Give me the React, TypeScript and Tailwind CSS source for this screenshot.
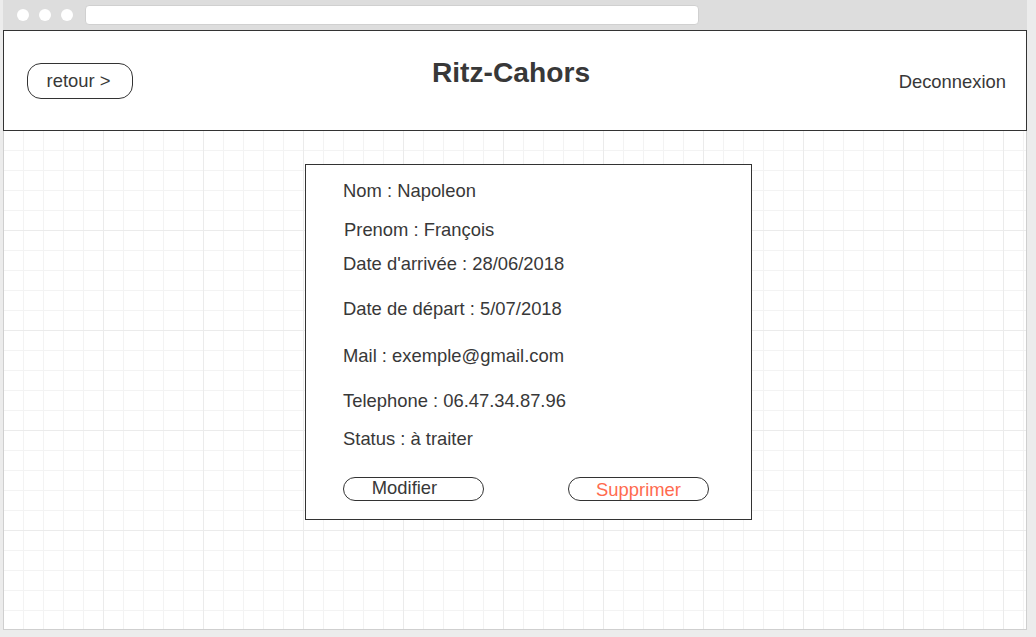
export default function App() {
  const rows = [
    { text: 'Nom : Napoleon', cls: 'mt-[15px]' },
    { text: 'Prenom : François', cls: 'mt-[17px] ml-px' },
    { text: "Date d'arrivée : 28/06/2018", cls: 'mt-[12px]' },
    { text: 'Date de départ : 5/07/2018', cls: 'mt-[23px]' },
    { text: 'Mail : exemple@gmail.com', cls: 'mt-[25px]' },
    { text: 'Telephone : 06.47.34.87.96', cls: 'mt-[23px]' },
    { text: 'Status : à traiter', cls: 'mt-[16px]' },
  ];

  return (
    <div className="w-[1036px] h-[637px] bg-[#ececec] pl-[3px] pb-[7px] font-['Liberation_Sans',Arial,sans-serif] text-[#383838]">
      <div className="flex flex-col h-full w-[1024px]">
        {/* browser chrome */}
        <div className="h-[30px] shrink-0 bg-[#dddddd] flex items-center pl-[14px]">
          <div className="flex gap-[10px]">
            <span className="w-[12px] h-[12px] rounded-full bg-white" />
            <span className="w-[12px] h-[12px] rounded-full bg-white" />
            <span className="w-[12px] h-[12px] rounded-full bg-white" />
          </div>
          <div className="ml-[12px] w-[614px] h-[20px] rounded-[4px] bg-white border border-[#d0d0d0]" />
        </div>

        {/* header */}
        <div className="h-[101px] shrink-0 border border-[#333] bg-white grid grid-cols-[1fr_auto_1fr] items-center px-[23px]">
          <div>
            <button className="w-[106px] h-[36px] rounded-[14px] border border-[#333] text-[18.4px] leading-[22px] mt-[1px] pr-[3px]">
              retour &gt;
            </button>
          </div>
          <div className="text-[28.2px] font-bold leading-[32px] -mt-[18px] mr-[8px]">Ritz-Cahors</div>
          <div className="justify-self-end text-[18.4px] leading-[22px] mt-[3px] -mr-[3px]">Deconnexion</div>
        </div>

        {/* grid canvas */}
        <div className="flex-1 border-x border-b border-[#cfcfcf] bg-white bg-[linear-gradient(to_right,#ebebeb_1px,transparent_1px),linear-gradient(to_bottom,#ebebeb_1px,transparent_1px),linear-gradient(to_right,#f3f3f3_1px,transparent_1px),linear-gradient(to_bottom,#f3f3f3_1px,transparent_1px)] bg-[size:100px_100px,100px_100px,20px_20px,20px_20px] bg-[position:-1px_-1px]">
          <div className="ml-[301px] mt-[33px] w-[447px] h-[356px] border border-[#333] bg-white pl-[37px] flex flex-col">
            {rows.map((r) => (
              <div key={r.text} className={`text-[18.4px] leading-[22px] ${r.cls}`}>
                {r.text}
              </div>
            ))}
            <div className="mt-[27px] flex gap-[84px]">
              <button className="w-[141px] h-[24px] rounded-full border border-[#333] text-[18.4px] leading-[20px] pr-[18px] pb-[2px]">
                Modifier
              </button>
              <button className="w-[141px] h-[24px] rounded-full border border-[#333] text-[18.4px] leading-[22px] text-[#ff6b4f] pt-[1px]">
                Supprimer
              </button>
            </div>
          </div>
        </div>
      </div>
    </div>
  );
}
